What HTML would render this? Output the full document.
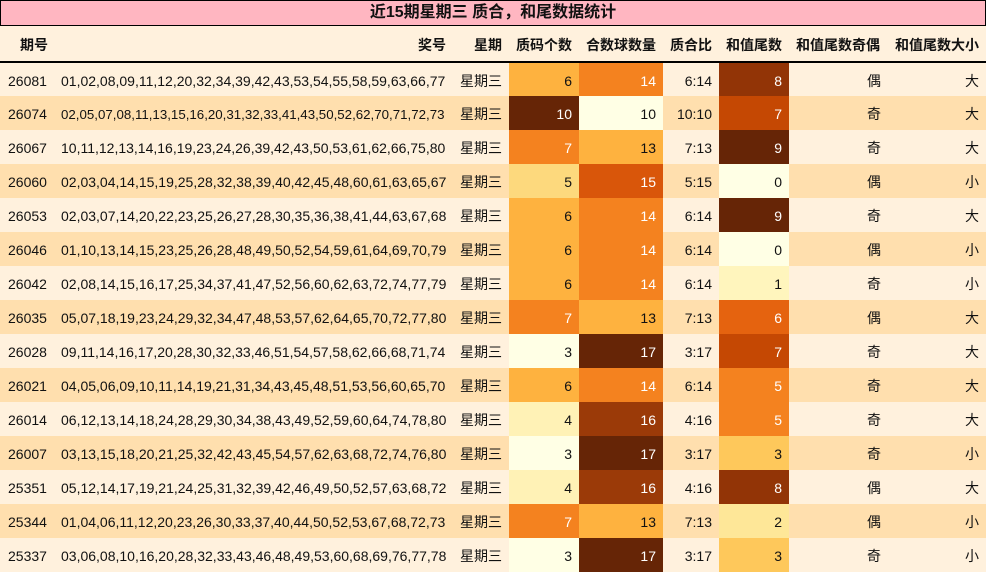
<!DOCTYPE html><html><head><meta charset="utf-8"><style>
body{margin:0;width:986px;height:573px;overflow:hidden;background:#fff;font-family:"Liberation Sans","Noto Sans CJK SC",sans-serif;font-size:14px;color:#111}
.t{height:24px;background:#ffb6c1;border:1px solid #000;text-align:center;font-weight:bold;font-size:16px;line-height:24px}
table{border-collapse:collapse;table-layout:fixed;width:986px}
td,th{padding:0 7px;white-space:nowrap;overflow:hidden}
th{height:36px;background:#fff1dd;font-weight:bold;border-bottom:2px solid #000;text-align:right;padding-top:3px;box-sizing:border-box}
td{height:34px;text-align:right;padding-top:2px;box-sizing:border-box}
td.n{padding:2px 0 0 6px;text-align:left}
tr:nth-child(odd) td{background:#fff1dd}tr:nth-child(even) td{background:#ffdfae}
td.c{text-align:center}td.l{text-align:left;padding-left:8px}
.w{color:#fff}
</style></head><body>
<div class="t">近15期星期三 质合，和尾数据统计</div>
<table>
<colgroup><col style="width:55px"><col style="width:398px"><col style="width:56px"><col style="width:70px"><col style="width:84px"><col style="width:56px"><col style="width:70px"><col style="width:98px"><col style="width:99px"></colgroup>
<thead><tr><th>期号</th><th>奖号</th><th>星期</th><th>质码个数</th><th>合数球数量</th><th>质合比</th><th>和值尾数</th><th>和值尾数奇偶</th><th>和值尾数大小</th></tr></thead>
<tbody id="b"></tbody></table>
<script>
var d=[["26081","01,02,08,09,11,12,20,32,34,39,42,43,53,54,55,58,59,63,66,77",6,14,8],
["26074","02,05,07,08,11,13,15,16,20,31,32,33,41,43,50,52,62,70,71,72,73",10,10,7],
["26067","10,11,12,13,14,16,19,23,24,26,39,42,43,50,53,61,62,66,75,80",7,13,9],
["26060","02,03,04,14,15,19,25,28,32,38,39,40,42,45,48,60,61,63,65,67",5,15,0],
["26053","02,03,07,14,20,22,23,25,26,27,28,30,35,36,38,41,44,63,67,68",6,14,9],
["26046","01,10,13,14,15,23,25,26,28,48,49,50,52,54,59,61,64,69,70,79",6,14,0],
["26042","02,08,14,15,16,17,25,34,37,41,47,52,56,60,62,63,72,74,77,79",6,14,1],
["26035","05,07,18,19,23,24,29,32,34,47,48,53,57,62,64,65,70,72,77,80",7,13,6],
["26028","09,11,14,16,17,20,28,30,32,33,46,51,54,57,58,62,66,68,71,74",3,17,7],
["26021","04,05,06,09,10,11,14,19,21,31,34,43,45,48,51,53,56,60,65,70",6,14,5],
["26014","06,12,13,14,18,24,28,29,30,34,38,43,49,52,59,60,64,74,78,80",4,16,5],
["26007","03,13,15,18,20,21,25,32,42,43,45,54,57,62,63,68,72,74,76,80",3,17,3],
["25351","05,12,14,17,19,21,24,25,31,32,39,42,46,49,50,52,57,63,68,72",4,16,8],
["25344","01,04,06,11,12,20,23,26,30,33,37,40,44,50,52,53,67,68,72,73",7,13,2],
["25337","03,06,08,10,16,20,28,32,33,43,46,48,49,53,60,68,69,76,77,78",3,17,3]];
var cc={3:"#ffffe5",4:"#fff2b6",5:"#fdd97d",6:"#feb23f",7:"#f4821f",10:"#662506"};
var hc={10:"#ffffe5",13:"#feb23f",14:"#f4821f",15:"#d9560a",16:"#9b3a08",17:"#662506"};
var tc=["#ffffe5","#fff5bd","#fee798","#fec85b","#fdac3a","#f4821f","#e5630f","#c54803","#923406","#662506"];
var h="";d.forEach(function(r){
var fs=r[1].length>60?" style='font-size:13.3px'":"";
h+="<tr><td class='l'>"+r[0]+"</td><td class='n'"+fs+">"+r[1]+"</td><td class='c'>星期三</td>"+
"<td style='background:"+cc[r[2]]+"' class='"+(r[2]>=7?"w":"")+"'>"+r[2]+"</td>"+
"<td style='background:"+hc[r[3]]+"' class='"+(r[3]>=14?"w":"")+"'>"+r[3]+"</td>"+
"<td>"+r[2]+":"+r[3]+"</td>"+
"<td style='background:"+tc[r[4]]+"' class='"+(r[4]>=5?"w":"")+"'>"+r[4]+"</td>"+
"<td style='padding-right:6px'>"+(r[4]%2?"奇":"偶")+"</td><td>"+(r[4]>=5?"大":"小")+"</td></tr>";});
document.getElementById("b").innerHTML=h;
</script></body></html>
